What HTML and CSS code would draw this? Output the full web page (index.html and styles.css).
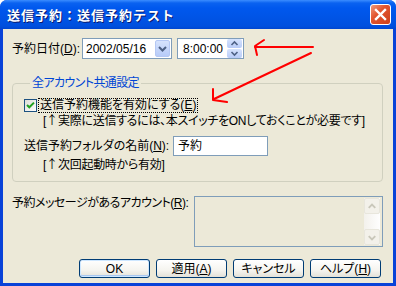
FILE: index.html
```html
<!DOCTYPE html>
<html lang="ja">
<head>
    <meta charset="UTF-8">
    <title>送信予約：送信予約テスト</title>
    <link rel="stylesheet" href="styles.css">
</head>
<body>

    <div class="window">
        <!-- Title bar -->
        <div class="titlebar">
            <span class="title">送信予約：送信予約テスト</span>
            <span class="close">
                <svg width="21" height="21" viewBox="0 0 21 21">
                    <path d="M6 6 L15 15 M15 6 L6 15" stroke="#fff" stroke-width="2.4" stroke-linecap="square"/>
                </svg>
            </span>
        </div>

        <div class="client">
            <!-- Date / time -->
            <div class="row row-date">
                <span class="lbl lbl-date">予約日付(<u>D</u>):</span>
                <div class="field date">
                    <span class="value">2002/05/16</span>
                    <span class="drop">
                        <svg width="15" height="17" viewBox="0 0 15 17">
                            <path d="M4 7 L7.5 10.5 L11 7" fill="none" stroke="#4d6185" stroke-width="2"/>
                        </svg>
                    </span>
                </div>
                <div class="field time">
                    <span class="value">8:00:00</span>
                    <span class="spin">
                        <span class="spin-btn">
                            <svg width="15" height="9" viewBox="0 0 15 9">
                                <path d="M4.5 6 L7.5 3 L10.5 6" fill="none" stroke="#4d6185" stroke-width="1.6"/>
                            </svg>
                        </span>
                        <span class="spin-btn">
                            <svg width="15" height="9" viewBox="0 0 15 9">
                                <path d="M4.5 3 L7.5 6 L10.5 3" fill="none" stroke="#4d6185" stroke-width="1.6"/>
                            </svg>
                        </span>
                    </span>
                </div>
            </div>

            <!-- Common settings group -->
            <fieldset class="group">
                <legend>全アカウント共通設定</legend>

                <div class="check-row">
                    <span class="checkbox">
                        <svg width="13" height="13" viewBox="0 0 13 13">
                            <path d="M3 6 L5.3 8.3 L10 3.6" fill="none" stroke="#21a121" stroke-width="2"/>
                        </svg>
                    </span>
                    <span class="focus">送信予約機能を有効にする(<u>E</u>)</span>
                </div>
                <div class="note">[<span class="arr">↑</span>実際に送信するには、本スイッチをONしておくことが必要です]</div>

                <div class="row row-folder">
                    <span class="lbl lbl-folder">送信予約フォルダの名前(<u>N</u>):</span>
                    <div class="field textbox">予約</div>
                </div>
                <div class="note note-2">[<span class="arr">↑</span>次回起動時から有効]</div>
            </fieldset>

            <!-- Accounts list -->
            <div class="row row-account">
                <span class="lbl lbl-account">予約メッセージがあるアカウント(<u>R</u>):</span>
                <div class="listbox">
                    <div class="scrollbar">
                        <span class="sb-btn">
                            <svg width="15" height="15" viewBox="0 0 15 15">
                                <path d="M4 9 L7.5 5.5 L11 9" fill="none" stroke="#c9c7ba" stroke-width="2"/>
                            </svg>
                        </span>
                        <span class="sb-track"></span>
                        <span class="sb-btn">
                            <svg width="15" height="15" viewBox="0 0 15 15">
                                <path d="M4 6 L7.5 9.5 L11 6" fill="none" stroke="#c9c7ba" stroke-width="2"/>
                            </svg>
                        </span>
                    </div>
                </div>
            </div>

            <!-- Dialog buttons -->
            <div class="buttons">
                <span class="btn btn-default">OK</span>
                <span class="btn">適用(<u>A</u>)</span>
                <span class="btn">キャンセル</span>
                <span class="btn">ヘルプ(<u>H</u>)</span>
            </div>
        </div>

        <!-- Red hand-drawn annotation arrows -->
        <svg class="annot" width="396" height="286" viewBox="0 0 396 286">
            <g fill="none" stroke="#ff0000" stroke-width="2" stroke-linecap="round" stroke-linejoin="round">
                <path d="M313 47 L255 47"/>
                <path d="M264 40 L255 46 L257 55"/>
                <path d="M311 53 L214 99"/>
                <path d="M213 89 L213 100 L227 102"/>
            </g>
        </svg>
    </div>

</body>
</html>
```

FILE: styles.css
```css
/* General */
body {
    margin: 0;
    padding: 0;
    background: #ffffff;
    font-family: "Liberation Sans", "Noto Sans CJK JP", sans-serif;
    font-size: 12px;
    line-height: 14px;
    color: #000000;
    white-space: nowrap;
    font-feature-settings: "palt";
}

u {
    text-decoration: underline;
    text-underline-offset: 1px;
}

/* Window frame */
.window {
    position: relative;
    width: 396px;
    height: 286px;
    background: #0842d8;
    border-radius: 7px 7px 0 0;
    overflow: hidden;
    display: flex;
    flex-direction: column;
}

.titlebar {
    height: 29px;
    flex: none;
    box-sizing: border-box;
    display: flex;
    align-items: center;
    justify-content: space-between;
    padding: 0 5px 0 7px;
    background: linear-gradient(to bottom, #3b8dff 0, #0a62f0 3px, #0058ee 8px, #0054e6 60%, #0050de 90%, #0046d0 100%);
}

.title {
    color: #ffffff;
    font-family: "Noto Sans CJK JP", sans-serif;
    font-weight: bold;
    font-size: 13px;
    letter-spacing: 1px;
    font-feature-settings: normal;
    text-shadow: 1px 1px 0 #0a1a6f;
}

.close {
    width: 21px;
    height: 21px;
    box-sizing: border-box;
    border: 1px solid #ffffff;
    border-radius: 3px;
    background: linear-gradient(135deg, #f09a7c 0, #e2552f 40%, #cc3f1a 100%);
    display: flex;
}

.close svg {
    margin: -1px;
}

/* Dialog client area */
.client {
    flex: none;
    height: 254px;
    box-sizing: border-box;
    margin: 0 3px;
    background: #ece9d8;
    padding: 9px 10px 0 9px;
    overflow: hidden;
}

.row {
    display: flex;
    align-items: center;
}

.lbl {
    flex: none;
}

.lbl-date {
    width: 70px;
}

/* Edit fields */
.field {
    flex: none;
    box-sizing: border-box;
    height: 21px;
    border: 1px solid #7f9db9;
    background: #ffffff;
    display: flex;
    align-items: center;
}

.date {
    width: 90px;
    padding: 1px 1px 1px 3px;
}

.date .value {
    flex: 1;
}

.drop {
    width: 15px;
    height: 17px;
    border: 1px solid #b5c8f4;
    border-radius: 2px;
    box-sizing: border-box;
    background: linear-gradient(to bottom, #d6e3fd, #b7cbf8);
    display: flex;
    align-items: center;
    justify-content: center;
}

.drop svg {
    margin: -1px;
}

.time {
    width: 67px;
    margin-left: 5px;
    padding: 1px 1px 1px 0;
}

.time .value {
    flex: 1;
    text-align: right;
    padding-right: 4px;
}

.spin {
    width: 15px;
    height: 19px;
    display: flex;
    flex-direction: column;
    gap: 1px;
}

.spin-btn {
    flex: 1;
    border-radius: 2px;
    background: linear-gradient(to bottom, #d6e3fd, #b7cbf8);
    display: flex;
    align-items: center;
    justify-content: center;
    overflow: hidden;
}

/* Group box */
.group {
    margin: 17px 0 0 0;
    padding: 0 10px 10px 11px;
    border: 1px solid #d0d0bf;
    border-radius: 4px;
    min-width: 0;
}

.group legend {
    color: #0046d5;
    padding: 0 2px;
    margin-left: 6px;
    line-height: 14px;
    letter-spacing: -0.6px;
}

.check-row {
    margin-top: 8px;
    height: 14px;
    display: flex;
    align-items: center;
}

.checkbox {
    flex: none;
    width: 13px;
    height: 13px;
    box-sizing: border-box;
    border: 1px solid #1c5180;
    background: linear-gradient(135deg, #dcdcd7, #ffffff);
    display: flex;
}

.checkbox svg {
    margin: -1px;
}

.focus {
    margin-left: 2px;
    padding: 0 1px;
    line-height: 13px;
    outline: 1px dotted #000000;
    outline-offset: 0;
}

.note {
    padding-left: 19px;
    height: 14px;
    margin-top: 1px;
    letter-spacing: -0.3px;
}

.arr {
    font-family: "Noto Sans CJK JP", sans-serif;
    font-feature-settings: normal;
    letter-spacing: 0;
}

.row-folder {
    margin-top: 9px;
}

.lbl-folder {
    width: 149px;
}

.textbox {
    width: 95px;
    height: 20px;
    padding: 0 4px;
}

.note-2 {
    margin-top: 1px;
}

/* Accounts list */
.row-account {
    margin-top: 14px;
    align-items: flex-start;
}

.lbl-account {
    width: 182px;
    letter-spacing: -0.5px;
}

.listbox {
    flex: none;
    box-sizing: border-box;
    width: 189px;
    height: 51px;
    border: 1px solid #7f9db9;
    background: #ece9d8;
    display: flex;
    justify-content: flex-end;
    padding: 1px 2px 1px 0;
}

.scrollbar {
    width: 16px;
    display: flex;
    flex-direction: column;
    background: linear-gradient(to right, #f3f1ec, #fefefe);
}

.sb-btn {
    height: 16px;
    box-sizing: border-box;
    border: 1px solid #e8e6dc;
    border-radius: 2px;
    background: #f3f1ea;
    display: flex;
    align-items: center;
    justify-content: center;
}

.sb-track {
    flex: 1;
}

/* Buttons */
.buttons {
    margin-top: 12px;
    display: flex;
    justify-content: flex-end;
    gap: 6px;
    padding-right: 2px;
}

.btn {
    width: 71px;
    height: 19px;
    box-sizing: border-box;
    border: 1px solid #003c74;
    border-radius: 3px;
    background: linear-gradient(to bottom, #ffffff 0, #f5f4ef 60%, #e3e1d8 100%);
    display: flex;
    align-items: center;
    justify-content: center;
}

.btn-default {
    box-shadow: inset 0 0 0 1px #cee7ff, inset 0 -1px 0 1px #a8c7f0;
}

/* Bottom frame edge */
.window::after {
    content: "";
    height: 3px;
    flex: none;
}

/* Annotation overlay */
.annot {
    position: absolute;
    left: 0;
    top: 0;
    pointer-events: none;
}
```
